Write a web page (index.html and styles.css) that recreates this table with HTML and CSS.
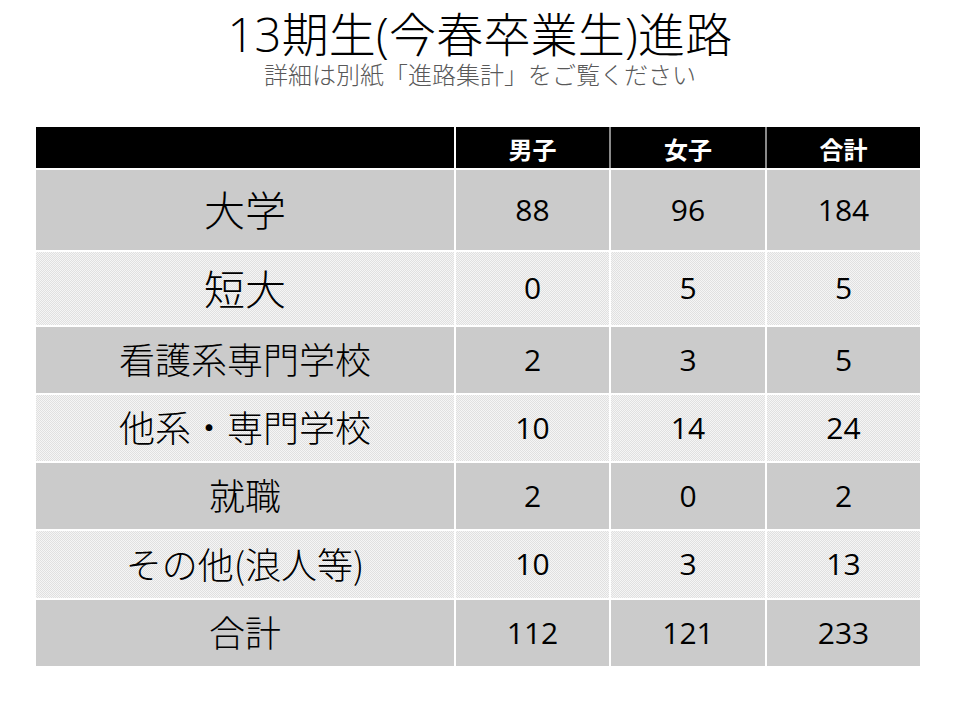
FILE: index.html
```html
<!DOCTYPE html>
<html lang="ja">
<head>
<meta charset="utf-8">
<title>13期生進路</title>
<link rel="stylesheet" href="styles.css">
</head>
<body>
<div class="slide">
  <header class="head">
    <h1 class="title">13期生(今春卒業生)進路</h1>
    <p class="sub">詳細は別紙「進路集計」をご覧ください</p>
  </header>
  <div class="grid">
    <div class="hc first"></div>
    <div class="hc">男子</div>
    <div class="hc sep">女子</div>
    <div class="hc sep">合計</div>

    <div class="c dark lbl big">大学</div>
    <div class="c dark num">88</div>
    <div class="c dark num">96</div>
    <div class="c dark num">184</div>

    <div class="c light lbl big">短大</div>
    <div class="c light num">0</div>
    <div class="c light num">5</div>
    <div class="c light num">5</div>

    <div class="c dark lbl">看護系専門学校</div>
    <div class="c dark num">2</div>
    <div class="c dark num">3</div>
    <div class="c dark num">5</div>

    <div class="c light lbl">他系・専門学校</div>
    <div class="c light num">10</div>
    <div class="c light num">14</div>
    <div class="c light num">24</div>

    <div class="c dark lbl">就職</div>
    <div class="c dark num">2</div>
    <div class="c dark num">0</div>
    <div class="c dark num">2</div>

    <div class="c light lbl">その他(浪人等)</div>
    <div class="c light num">10</div>
    <div class="c light num">3</div>
    <div class="c light num">13</div>

    <div class="c dark lbl">合計</div>
    <div class="c dark num">112</div>
    <div class="c dark num">121</div>
    <div class="c dark num">233</div>
  </div>
</div>
</body>
</html>
```

FILE: styles.css
```css
html, body {
  margin: 0;
  padding: 0;
  background: #ffffff;
}
body {
  font-family: "Open Sans", "Noto Sans CJK JP", sans-serif;
  color: #000;
}
.slide {
  width: 960px;
  height: 720px;
  display: flex;
  flex-direction: column;
  align-items: center;
}
.head {
  display: flex;
  flex-direction: column;
  align-items: center;
  padding-top: 11px;
}
.title {
  margin: 0;
  font-weight: 300;
  font-size: 47px;
  line-height: 46px;
  letter-spacing: 0.2px;
}
.sub {
  margin: 4px 0 0;
  font-size: 24px;
  line-height: 25px;
  font-weight: 300;
  color: #595959;
  font-family: "Noto Sans CJK JP", sans-serif;
}
.grid {
  margin-top: 41px;
  align-self: flex-start;
  margin-left: 36px;
  display: grid;
  grid-template-columns: 418px 153px 154px 153px;
  grid-template-rows: 41px 80px 73px 66px 66px 66px 67px 66px;
  gap: 2px;
  background: #ffffff;
}
.hc {
  background: #000;
  color: #fff;
  font-family: "Noto Sans CJK JP", sans-serif;
  font-weight: 700;
  font-size: 24px;
  display: flex;
  align-items: center;
  justify-content: center;
  padding-top: 1px;
}
.hc.sep {
  box-shadow: -2px 0 0 #8a8a8a;
}
.c {
  display: flex;
  align-items: center;
  justify-content: center;
}
.dark {
  background: #cbcbcb;
}
.light {
  background-color: #ebebeb;
  background-image: repeating-conic-gradient(#e0e0e0 0 25%, #f5f5f5 0 50%);
  background-size: 2px 2px;
}
.lbl {
  font-family: "Noto Sans CJK JP", sans-serif;
  font-size: 36px;
  font-weight: 300;
  padding-bottom: 4px;
}
.lbl.big {
  font-size: 41px;
}
.num {
  font-size: 30px;
  padding-bottom: 2px;
}
```
